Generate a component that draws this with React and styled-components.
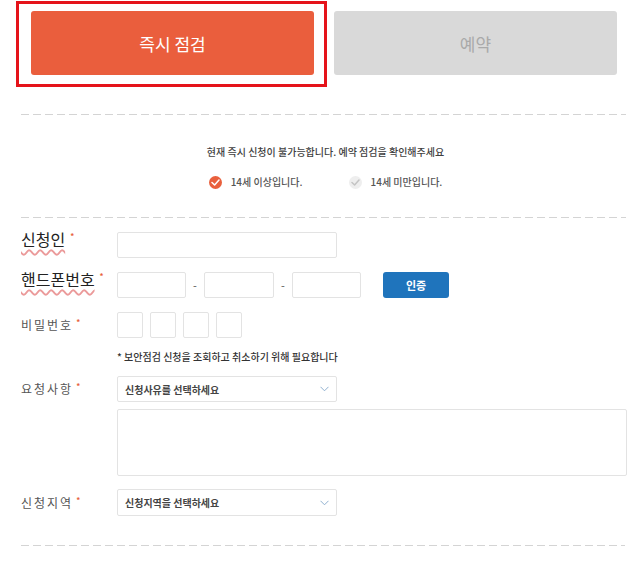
import React from "react";
import styled, { createGlobalStyle } from "styled-components";

const Global = createGlobalStyle`
  html, body { margin: 0; padding: 0; background: #fff; }
  body { font-family: "Noto Sans CJK KR", "Noto Sans", sans-serif; }
  * { box-sizing: border-box; }
`;

const Page = styled.div`
  width: 642px;
  height: 565px;
  overflow: hidden;
`;

const TopRow = styled.div`
  display: flex;
  align-items: flex-start;
  padding: 1px 0 0 16px;
`;

const ActiveFrame = styled.div`
  border: 3px solid #e5131a;
  padding: 7px 10px 9px 12px;
`;

const Tab = styled.div`
  width: 283px;
  height: 64px;
  border-radius: 3px;
  display: flex;
  align-items: center;
  justify-content: center;
  font-size: 17px;
  background: ${(p) => (p.$active ? "#ea5e3d" : "#d9d9d9")};
  color: ${(p) => (p.$active ? "#ffffff" : "#a9a9a9")};
  margin: ${(p) => (p.$active ? "0" : "10px 0 0 7px")};
`;

const Divider = styled.div`
  margin: ${(p) => p.$mt}px 0 0 21px;
  width: ${(p) => p.$w || 605}px;
  height: 1px;
  background-image: repeating-linear-gradient(
    to right,
    #d4d4d4 0,
    #d4d4d4 8px,
    transparent 8px,
    transparent 12px
  );
`;

const Section = styled.div`
  margin-left: 21px;
  width: 609px;
`;

const Notice = styled.div`
  margin-top: 29px;
  text-align: center;
  font-size: 10px;
  line-height: 16px;
  font-weight: 500;
  color: #3f3f3f;
`;

const CheckRow = styled.div`
  margin-top: 14px;
  display: flex;
  justify-content: center;
  gap: 46px;
  line-height: 16px;
`;

const CheckItem = styled.div`
  display: flex;
  align-items: center;
  gap: 9px;
  font-size: 10px;
  font-weight: 500;
  color: #555;
`;

const CheckCircle = styled.span`
  width: 13px;
  height: 13px;
  border-radius: 50%;
  background: ${(p) => (p.$on ? "#e9603d" : "#eeeeee")};
  display: inline-flex;
  align-items: center;
  justify-content: center;
`;

const Form = styled.div`
  margin-left: 21px;
`;

const Row = styled.div`
  display: flex;
  align-items: center;
  margin-top: ${(p) => p.$mt}px;
`;

const Label = styled.div`
  width: 96px;
  flex: none;
  white-space: nowrap;
  font-size: 12px;
  letter-spacing: 2px;
  color: #555;
  line-height: 26px;
`;

const BigLabel = styled.div`
  width: 96px;
  flex: none;
  align-self: flex-start;
  margin-top: -4px;
  white-space: nowrap;
  font-size: 16px;
  line-height: 22px;
  color: #222;
`;

const Spell = styled.span`
  text-decoration: underline wavy #eb9a9a;
  text-decoration-thickness: 1.5px;
  text-underline-offset: 3px;
`;

const Req = styled.span`
  display: inline-block;
  vertical-align: top;
  color: #e8603c;
  font-size: 8px;
  line-height: 8px;
  font-weight: 700;
  margin-left: ${(p) => (p.$big ? 5 : 3)}px;
  margin-top: ${(p) => (p.$big ? 4 : 6)}px;
  letter-spacing: 0;
`;

const Input = styled.div`
  width: ${(p) => p.$w}px;
  height: ${(p) => p.$h || 26}px;
  border: 1px solid #e3e3e3;
  border-radius: 2px;
  background: #fff;
  flex: none;
`;

const Dash = styled.span`
  width: 18px;
  text-align: center;
  font-size: 11px;
  color: #555;
`;

const AuthButton = styled.div`
  margin-left: 22px;
  width: 66px;
  height: 26px;
  border-radius: 3px;
  background: #1f74bc;
  color: #fff;
  font-size: 11px;
  font-weight: 700;
  display: flex;
  align-items: center;
  justify-content: center;
`;

const PinGroup = styled.div`
  display: flex;
  gap: 7px;
`;

const Note = styled.div`
  margin-top: 12px;
  padding-left: 96px;
  font-size: 10px;
  line-height: 14px;
  font-weight: 500;
  color: #333;
`;

const SelectBox = styled.div`
  width: 220px;
  height: ${(p) => p.$h || 26}px;
  border: 1px solid #e3e3e3;
  border-radius: 2px;
  display: flex;
  align-items: center;
  justify-content: space-between;
  padding: 0 7px 0 7px;
  font-size: 10px;
  font-weight: 700;
  color: #444;
`;

const TextArea = styled.div`
  margin: 7px 0 0 96px;
  width: 510px;
  height: 67px;
  border: 1px solid #e3e3e3;
  border-radius: 2px;
`;

const Chevron = () => (
  <svg width="9" height="6" viewBox="0 0 9 6">
    <polyline points="0.5,0.8 4.5,4.8 8.5,0.8" fill="none" stroke="#8fb0cf" strokeWidth="1" />
  </svg>
);

const Tick = ({ color }) => (
  <svg width="9" height="7" viewBox="0 0 9 7">
    <polyline points="1,3.5 3.6,6 8,1" fill="none" stroke={color} strokeWidth="1.5" strokeLinecap="round" strokeLinejoin="round" />
  </svg>
);

export default function App() {
  return (
    <Page>
      <Global />
      <TopRow>
        <ActiveFrame>
          <Tab $active>즉시 점검</Tab>
        </ActiveFrame>
        <Tab>예약</Tab>
      </TopRow>

      <Divider $mt={27} />

      <Section>
        <Notice>현재 즉시 신청이 불가능합니다. 예약 점검을 확인해주세요</Notice>
        <CheckRow>
          <CheckItem>
            <CheckCircle $on>
              <Tick color="#ffffff" />
            </CheckCircle>
            14세 이상입니다.
          </CheckItem>
          <CheckItem>
            <CheckCircle>
              <Tick color="#c4c4c4" />
            </CheckCircle>
            14세 미만입니다.
          </CheckItem>
        </CheckRow>
      </Section>

      <Divider $mt={27} />

      <Form>
        <Row $mt={14}>
          <BigLabel>
            <Spell>신청인</Spell>
            <Req $big>*</Req>
          </BigLabel>
          <Input $w={220} />
        </Row>

        <Row $mt={14}>
          <BigLabel>
            <Spell>핸드폰번호</Spell>
            <Req $big>*</Req>
          </BigLabel>
          <Input $w={69} />
          <Dash>-</Dash>
          <Input $w={70} />
          <Dash>-</Dash>
          <Input $w={69} />
          <AuthButton>인증</AuthButton>
        </Row>

        <Row $mt={14}>
          <Label>
            비밀번호
            <Req>*</Req>
          </Label>
          <PinGroup>
            <Input $w={26} />
            <Input $w={26} />
            <Input $w={26} />
            <Input $w={26} />
          </PinGroup>
        </Row>

        <Note>* 보안점검 신청을 조회하고 취소하기 위해 필요합니다</Note>

        <Row $mt={12}>
          <Label>
            요청사항
            <Req>*</Req>
          </Label>
          <SelectBox>
            <span>신청사유를 선택하세요</span>
            <Chevron />
          </SelectBox>
        </Row>

        <TextArea />

        <Row $mt={13}>
          <Label>
            신청지역
            <Req>*</Req>
          </Label>
          <SelectBox $h={27}>
            <span>신청지역을 선택하세요</span>
            <Chevron />
          </SelectBox>
        </Row>
      </Form>

      <Divider $mt={29} $w={604} />
    </Page>
  );
}
